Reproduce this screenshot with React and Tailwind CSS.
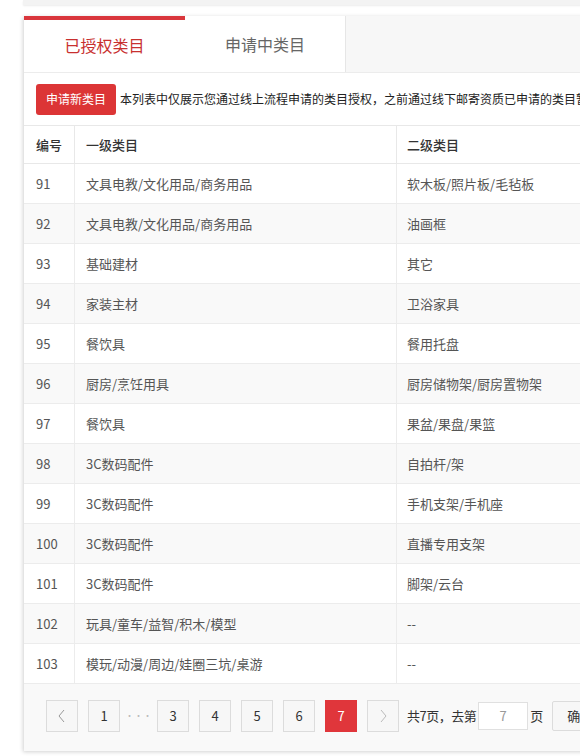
import React from "react";

const rows = [
  ["91", "文具电教/文化用品/商务用品", "软木板/照片板/毛毡板"],
  ["92", "文具电教/文化用品/商务用品", "油画框"],
  ["93", "基础建材", "其它"],
  ["94", "家装主材", "卫浴家具"],
  ["95", "餐饮具", "餐用托盘"],
  ["96", "厨房/烹饪用具", "厨房储物架/厨房置物架"],
  ["97", "餐饮具", "果盆/果盘/果篮"],
  ["98", "3C数码配件", "自拍杆/架"],
  ["99", "3C数码配件", "手机支架/手机座"],
  ["100", "3C数码配件", "直播专用支架"],
  ["101", "3C数码配件", "脚架/云台"],
  ["102", "玩具/童车/益智/积木/模型", "--"],
  ["103", "模玩/动漫/周边/娃圈三坑/桌游", "--"],
];

function PageBtn({ children, active }) {
  return (
    <div
      className={
        active
          ? "w-[32px] h-[32px] flex items-center justify-center bg-[#e0363b] text-white text-[13px]"
          : "w-[32px] h-[32px] flex items-center justify-center border border-[#dcdcdc] bg-[#f7f7f7] text-[#333] text-[13px]"
      }
    >
      {children}
    </div>
  );
}

export default function App() {
  return (
    <div
      className="w-[580px] h-[756px] overflow-hidden bg-white relative"
      style={{ fontFamily: '"Noto Sans CJK SC", "Microsoft YaHei", sans-serif' }}
    >
      <div className="ml-[23px] w-[700px] h-[5px] bg-[#f3f3f3] shadow-[0_1px_2px_rgba(0,0,0,0.08)]" />

      <div className="ml-[24px] mt-[11px] w-[900px] shadow-[-1px_1px_4px_rgba(0,0,0,0.18)]">
        <div className="flex h-[56px] bg-[#f7f7f7]">
          <div className="w-[161px] bg-white border-t-[4px] border-[#d9363c] flex items-center justify-center text-[16px] text-[#c8302f] pb-[2px]">
            已授权类目
          </div>
          <div className="w-[161px] bg-white border-r border-[#e6e6e6] flex items-center justify-center text-[16px] text-[#666]">
            申请中类目
          </div>
        </div>

        <div className="bg-white border-t border-[#ececec]">
          <div className="flex items-center h-[53px] pl-[12px] border-b border-[#e8e8e8]">
            <div className="h-[31px] px-[10px] rounded-[3px] bg-[#dc3536] text-white text-[12px] flex items-center">
              申请新类目
            </div>
            <div className="ml-[4px] text-[12px] text-[#222] whitespace-nowrap">
              本列表中仅展示您通过线上流程申请的类目授权，之前通过线下邮寄资质已申请的类目暂不在此展示
            </div>
          </div>

          <div>
            <div className="flex h-[38px] border-b border-[#e8e8e8] text-[13px] text-[#333] font-medium">
              <div className="w-[51px] pl-[12px] flex items-center border-r border-[#e8e8e8]">编号</div>
              <div className="w-[322px] pl-[11px] flex items-center border-r border-[#e8e8e8]">一级类目</div>
              <div className="flex-1 pl-[10px] flex items-center">二级类目</div>
            </div>
            {rows.map((r, i) => (
              <div
                key={r[0]}
                className={
                  i % 2 === 1
                    ? "flex h-[40px] border-b border-[#ececec] text-[13px] text-[#555] bg-[#f9f9f9]"
                    : "flex h-[40px] border-b border-[#ececec] text-[13px] text-[#555] bg-white"
                }
              >
                <div className="w-[51px] pl-[12px] flex items-center border-r border-[#ececec]">{r[0]}</div>
                <div className="w-[322px] pl-[11px] flex items-center border-r border-[#ececec]">{r[1]}</div>
                <div className="flex-1 pl-[10px] flex items-center">{r[2]}</div>
              </div>
            ))}
          </div>

          <div className="bg-[#f9f9f9] h-[67px] pl-[22px] pt-[16px] flex items-start gap-[10px]">
            <PageBtn>
              <svg width="10" height="14" viewBox="0 0 10 14" fill="none" stroke="#999" strokeWidth="1">
                <path d="M7 1 L2 7 L7 13" />
              </svg>
            </PageBtn>
            <PageBtn>1</PageBtn>
            <div className="w-[17px] h-[32px] flex items-center justify-center text-[#bbb] text-[9px]">···</div>
            <PageBtn>3</PageBtn>
            <PageBtn>4</PageBtn>
            <PageBtn>5</PageBtn>
            <PageBtn>6</PageBtn>
            <PageBtn active>7</PageBtn>
            <PageBtn>
              <svg width="10" height="14" viewBox="0 0 10 14" fill="none" stroke="#bbb" strokeWidth="1">
                <path d="M3 1 L8 7 L3 13" />
              </svg>
            </PageBtn>
            <div className="flex items-center h-[32px] -ml-[2px] text-[13px] text-[#333]">
              <span className="tracking-[-0.5px]">共7页，去第</span>
              <div className="ml-[2px] w-[50px] h-[28px] bg-white border border-[#e0e0e0] flex items-center justify-center text-[#999]">7</div>
              <span className="ml-[2px]">页</span>
              <div className="ml-[9px] h-[30px] px-[14px] border border-[#dcdcdc] bg-[#f7f7f7] rounded-[2px] flex items-center">确定</div>
            </div>
          </div>
        </div>
      </div>
    </div>
  );
}
